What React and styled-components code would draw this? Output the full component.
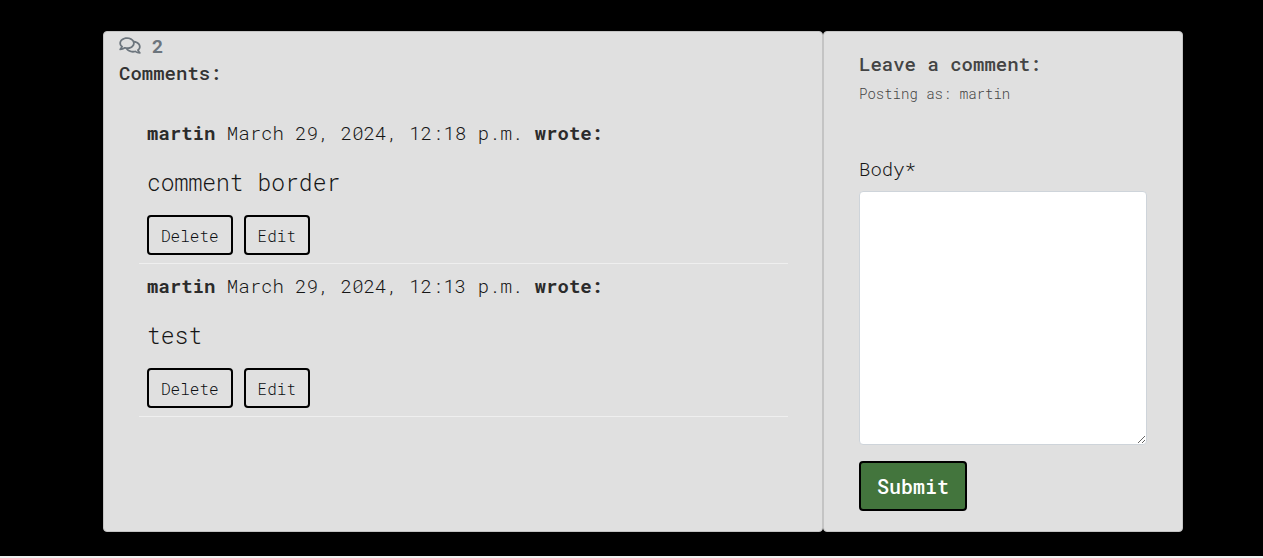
import React from "react";
import styled, { createGlobalStyle } from "styled-components";
import { FaRegComments } from "react-icons/fa";

const mono = `"Roboto Mono", "Liberation Mono", "DejaVu Sans Mono", monospace`;

const GlobalStyle = createGlobalStyle`
  *, *::before, *::after { box-sizing: border-box; }
  body {
    margin: 0;
    background: #f1f1f1;
    color: #161616;
    font-family: ${mono};
    font-size: 19px;
    font-weight: 300;
    line-height: 28px;
  }
`;

const Section = styled.main`
  background: #000;
  padding: 31px 80px 24px 103px;
`;

const Columns = styled.div`
  display: grid;
  grid-template-columns: 2fr 1fr;
`;

const Card = styled.section`
  background: #e0e0e0;
  border: 1px solid #c4c4c4;
  border-radius: 4px;
  padding: ${(p) => (p.$roomy ? "18px 35px 20px" : "0 0 20px")};
`;

const CardHeader = styled.header`
  padding: 0 15px;
`;

const Count = styled.div`
  display: flex;
  align-items: center;
  gap: 11px;
  color: #6c757d;
  font-weight: 700;
  line-height: 27px;

  svg {
    width: 22px;
    height: 19px;
  }
`;

const Title = styled.h2`
  margin: 0;
  font-size: 19px;
  font-weight: 500;
  line-height: 28px;
  color: ${(p) => (p.$soft ? "#444" : "#333")};
`;

const CommentList = styled.ul`
  list-style: none;
  margin: 24px 34px 0 35px;
  padding: 0;
`;

const Comment = styled.li`
  padding: 8px;
  border-bottom: 1px solid #efefef;
`;

const Meta = styled.p`
  margin: 0 0 18px;
  line-height: 28px;

  strong {
    font-weight: 700;
    color: #2b2b2b;
  }
`;

const CommentText = styled.p`
  margin: 0 0 16px;
  font-size: 23px;
  line-height: 34px;
`;

const Actions = styled.div`
  display: flex;
  gap: 11px;
`;

const Button = styled.button`
  height: ${(p) => (p.$primary ? "50px" : "40px")};
  padding: 0 ${(p) => (p.$primary ? "16px" : "12px")};
  border: 2px solid #000;
  border-radius: 4px;
  background: ${(p) => (p.$primary ? "#43753d" : "transparent")};
  color: ${(p) => (p.$primary ? "#fff" : "#0c0f12")};
  font-family: ${mono};
  font-size: ${(p) => (p.$primary ? "20px" : "16px")};
  font-weight: ${(p) => (p.$primary ? 500 : 300)};
  cursor: pointer;
`;

const Form = styled.form`
  display: flex;
  flex-direction: column;
  align-items: flex-start;
`;

const PostingAs = styled.p`
  margin: 6px 0 51px;
  font-size: 14px;
  line-height: 20px;
  color: #444;
`;

const TextArea = styled.textarea`
  display: block;
  width: 100%;
  height: 254px;
  margin: 8px 0 16px;
  padding: 6px 12px;
  border: 1px solid #ced4da;
  border-radius: 4px;
  background: #fff;
  font-family: ${mono};
  font-size: 16px;
  resize: vertical;
`;

const comments = [
  { author: "martin", date: "March 29, 2024, 12:18 p.m.", text: "comment border" },
  { author: "martin", date: "March 29, 2024, 12:13 p.m.", text: "test" },
];

export default function App() {
  return (
    <>
      <GlobalStyle />
      <Section>
        <Columns>
          <Card>
            <CardHeader>
              <Count>
                <FaRegComments aria-hidden="true" />
                <span>{comments.length}</span>
              </Count>
              <Title>Comments:</Title>
            </CardHeader>
            <CommentList>
              {comments.map((c) => (
                <Comment key={c.date}>
                  <Meta>
                    <strong>{c.author}</strong> {c.date} <strong>wrote:</strong>
                  </Meta>
                  <CommentText>{c.text}</CommentText>
                  <Actions>
                    <Button type="button">Delete</Button>
                    <Button type="button">Edit</Button>
                  </Actions>
                </Comment>
              ))}
            </CommentList>
          </Card>
          <Card $roomy>
            <Title $soft>Leave a comment:</Title>
            <PostingAs>Posting as: martin</PostingAs>
            <Form onSubmit={(e) => e.preventDefault()}>
              <label htmlFor="body">Body*</label>
              <TextArea id="body" name="body" required />
              <Button type="submit" $primary>
                Submit
              </Button>
            </Form>
          </Card>
        </Columns>
      </Section>
    </>
  );
}
